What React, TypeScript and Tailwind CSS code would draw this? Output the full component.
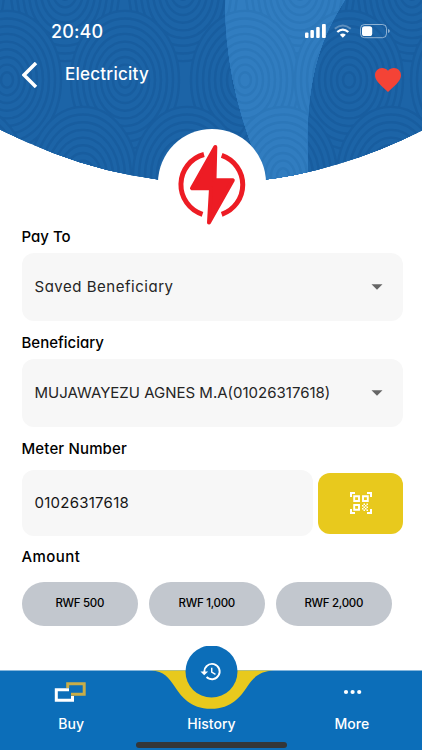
import { Fragment, type ReactNode } from 'react';

const RINGS = [54, 48, 42, 36, 30, 24, 18, 12, 6];

const WAVES = [
  ...[-50, 65, 183, 300, 412].map((x) => ({ x, y: -8 })),
  ...[7, 245, 125, 349, 465].map((x) => ({ x, y: 80 })),
  ...[-28, 83, 187, 283, 391].map((x) => ({ x, y: 176 })),
];

const AMOUNTS = ['RWF 500', 'RWF 1,000', 'RWF 2,000'];

function Waves({ fill, line }: { fill: string; line: string }) {
  return (
    <>
      <rect width="422" height="190" fill={fill} />
      {WAVES.map(({ x, y }) => (
        <Fragment key={`${x}-${y}`}>
          {RINGS.map((r) => (
            <ellipse key={r} cx={x} cy={y} rx={r} ry={r * 1.28} fill={fill} stroke={line} strokeWidth="2.400" />
          ))}
        </Fragment>
      ))}
    </>
  );
}

function HeaderArt() {
  return (
    <svg className="absolute inset-0" width="422" height="240" viewBox="0 0 422 240" aria-hidden="true">
      <defs>
        <clipPath id="bowl">
          <path d="M0 0H422V130.500Q211 236 0 129.500Z" />
        </clipPath>
        <clipPath id="ribbon">
          <path d="M225 0H345C318 42 302 88 309 190H270C240 125 225 65 225 0Z" />
        </clipPath>
      </defs>
      <g clipPath="url(#bowl)">
        <Waves fill="#1c64a7" line="#185d9f" />
        <g clipPath="url(#ribbon)">
          <Waves fill="#317dc0" line="#2c77b9" />
        </g>
      </g>
      <circle cx="212" cy="183" r="54" fill="#fff" />
      <g fill="none" stroke="#ed1c24" strokeWidth="5">
        <path d="M204 154.500A31.200 31.200 0 0 0 202.500 214.300" />
        <path d="M221.700 155.300A31.200 31.200 0 0 1 221.700 214.300" />
      </g>
      <path
        d="M215.300 147L192 188.300H211L209 222.500L232.800 180.300H214.500Z"
        fill="#ed1c24"
        stroke="#ed1c24"
        strokeWidth="4"
        strokeLinejoin="round"
      />
    </svg>
  );
}

function StatusIcons() {
  return (
    <svg className="ml-auto" width="87" height="16" viewBox="304 23 87 16" aria-hidden="true">
      <g fill="#fff">
        <rect x="305" y="32.500" width="3.500" height="5.500" rx="1" />
        <rect x="310.400" y="30" width="3.500" height="8" rx="1" />
        <rect x="316.200" y="27" width="3.500" height="11" rx="1" />
        <rect x="322" y="24" width="3.800" height="14" rx="1" />
        <path d="M339.800 34.800Q342.800 32.400 345.800 34.800L342.800 37.800Z" />
        <rect x="362" y="26.200" width="10.200" height="9.800" rx="2.600" />
      </g>
      <g fill="none" stroke="#fff">
        <path d="M334.800 28.800Q342.800 22.200 350.800 28.800" strokeWidth="2" opacity="0.3" />
        <path d="M337.300 32Q342.800 27.200 348.300 32" strokeWidth="2.300" />
        <rect x="360.500" y="24.500" width="26" height="13.200" rx="4" opacity="0.5" />
      </g>
      <path d="M388 29V33Q389.800 32.400 389.800 31T388 29Z" fill="#fff" opacity="0.5" />
    </svg>
  );
}

function Label({ children }: { children: ReactNode }) {
  return <div className="h-6 text-[15px] leading-6 font-medium text-black">{children}</div>;
}

function SelectField({ children }: { children: ReactNode }) {
  return (
    <button className="flex h-[68px] w-[381.5px] items-center justify-between rounded-xl bg-[#f7f7f7] pr-[20px] pl-[13px] text-left text-[#252525]">
      {children}
      <svg width="12" height="6" viewBox="0 0 12 6" aria-hidden="true">
        <path d="M0.500 0.300H11.500L6 5.800Z" fill="#666" />
      </svg>
    </button>
  );
}

function QrIcon() {
  return (
    <svg width="22" height="22" viewBox="0 0 22 22" fill="none" stroke="#fff" aria-hidden="true">
      <path d="M1 5V1H5M17 1H21V5M1 17V21H5M17 21H21V17" strokeWidth="2" />
      <path d="M4.200 4.200H9V9H4.200ZM13 4.200H17.800V9H13ZM4.200 13H9V17.800H4.200Z" strokeWidth="1.900" />
      <path
        d="M13.500 12.200H15M16.500 12.200H18M12 13.700H13.500M15 13.700H16.500M13.500 15.200H15M16.500 15.200H18M12 16.700H13.500M15 16.700H16.500M13.500 18.200H15M16.500 18.200H18"
        strokeWidth="1.500"
      />
    </svg>
  );
}

function BottomNav() {
  return (
    <nav className="relative mt-auto h-[104px] shrink-0 text-[14px] font-medium text-white">
      <svg className="absolute inset-0" width="422" height="104" viewBox="0 646 422 104" aria-hidden="true">
        <rect y="670.500" width="422" height="80" fill="#0c6eb9" />
        <path
          d="M151 670.500C164 671 169 678 175 687S190 708.800 211 708.800S241 696 247 687S259 671 274 670.500Z"
          fill="#e8c91d"
        />
        <circle cx="211.500" cy="671.500" r="26" fill="#0c6eb9" />
        <g transform="translate(199.500 660) scale(0.96)" fill="#fff">
          <path d="M13 3a9 9 0 0 0-9 9H1l3.900 3.900L9 12H6a7 7 0 1 1 2.060 4.940l-1.420 1.420A9 9 0 1 0 13 3Zm-1 5v5l4.250 2.520.77-1.280-3.520-2.090V8Z" />
        </g>
        <g fill="none" strokeWidth="3">
          <path d="M67.700 688V683.800H84.200V694.200H71" stroke="#c8ad48" />
          <path d="M69 689.800H56.300V700.200H72.500V696" stroke="#fff" />
        </g>
        <g fill="#fff">
          <circle cx="346" cy="692" r="2.100" />
          <circle cx="352.600" cy="692" r="2.100" />
          <circle cx="359.200" cy="692" r="2.100" />
        </g>
      </svg>
      <div className="relative grid grid-cols-3 pt-[67px] pl-px text-center leading-[22px]">
        <span>Buy</span>
        <span>History</span>
        <span>More</span>
      </div>
      <div className="relative mx-auto mt-[7px] h-[6px] w-[151px] rounded-full bg-[#343638]" />
    </nav>
  );
}

export default function App() {
  return (
    <div className="flex h-[750px] w-[422px] flex-col overflow-hidden bg-white font-['Inter',sans-serif] [font-feature-settings:'cv11']">
      <header className="relative h-[225px] shrink-0 text-white">
        <HeaderArt />
        <div className="relative flex h-[62px] items-center pr-[31px] pl-[51px]">
          <span className="text-[18px] font-medium tracking-[0.1px]">20:40</span>
          <StatusIcons />
        </div>
        <div className="relative flex h-[26px] items-center pr-[21px] pl-[22px]">
          <svg width="16" height="26" viewBox="0 0 16 26" aria-hidden="true">
            <path d="M14 1L2 13L14 25" fill="none" stroke="#fff" strokeWidth="3.500" />
          </svg>
          <h1 className="ml-[27px] text-[17px] font-medium tracking-[0.25px]">Electricity</h1>
          <svg className="mt-[10px] ml-auto" width="26" height="24" viewBox="2 3 20 18.350" aria-hidden="true">
            <path
              d="M12 21.350l-1.450-1.320C5.400 15.360 2 12.280 2 8.500 2 5.420 4.420 3 7.500 3c1.740 0 3.410.810 4.500 2.090C13.090 3.810 14.760 3 16.500 3 19.580 3 22 5.420 22 8.500c0 3.780-3.400 6.860-8.550 11.540L12 21.350z"
              fill="#f44336"
            />
          </svg>
        </div>
      </header>

      <main className="flex flex-col pr-[18px] pl-[21.5px] text-[15px]">
        <Label>Pay To</Label>
        <div className="mt-1">
          <SelectField>
            <span className="tracking-[0.52px]">Saved Beneficiary</span>
          </SelectField>
        </div>
        <div className="mt-[10px]">
          <Label>Beneficiary</Label>
        </div>
        <div className="mt-1">
          <SelectField>
            <span className="whitespace-nowrap">MUJAWAYEZU AGNES M.A(01026317618)</span>
          </SelectField>
        </div>
        <div className="mt-[10px] tracking-[0.15px]">
          <Label>Meter Number</Label>
        </div>
        <div className="mt-[9px] flex items-center gap-[5px]">
          <div className="flex h-[66px] w-[291.5px] items-center rounded-xl bg-[#f7f7f7] pl-[13px] tracking-[0.25px] text-[#151515]">
            01026317618
          </div>
          <button className="flex h-[61px] w-[85px] shrink-0 items-center justify-center rounded-xl bg-[#e8c91d]">
            <QrIcon />
          </button>
        </div>
        <div className="mt-[9px] tracking-[0.45px]">
          <Label>Amount</Label>
        </div>
        <div className="mt-[13px] flex gap-[10.500px]">
          {AMOUNTS.map((amount) => (
            <button
              key={amount}
              className="h-[44px] w-[116.500px] rounded-full bg-[#c2c7ce] text-[11.5px] font-medium tracking-[-0.3px] text-black"
            >
              {amount}
            </button>
          ))}
        </div>
      </main>

      <BottomNav />
    </div>
  );
}
